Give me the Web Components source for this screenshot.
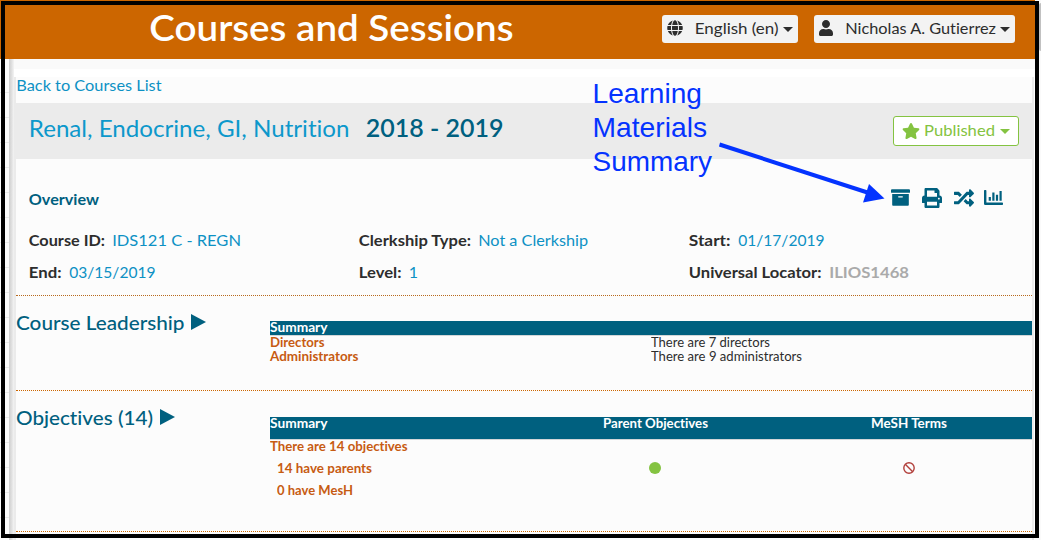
<!DOCTYPE html>
<html lang="en">
<head>
<meta charset="utf-8">
<title>Courses and Sessions</title>
<style>
html,body{margin:0;height:540px;overflow:hidden;background:#fff}
body{font-family:Lato,"Open Sans",sans-serif;font-variant-ligatures:none;color:#2d2d2d}
</style>
</head>
<body>
<course-app></course-app>

<template id="app">
<style>
:host{display:block;position:relative;width:1041px;height:540px;overflow:hidden;font-size:16px;background:#fff;--dy:-1px}
.page{display:flex;height:540px}
.side{flex:none;width:9px;height:100%;background:repeating-linear-gradient(#fdfdfd 0 24px,#ececec 24px 25px);background-position:0 9px}
.shade{flex:none;width:5px;background:linear-gradient(90deg,#cfcfcf,#ddd 45%,#f4f4f4)}
.main{flex:none;width:1021px;display:flex;flex-direction:column}
.gap1{height:10px;background:#fafafa}
.gap2{height:8px;background:#fff}
.sheet{flex:1;width:1016px;border:solid #ebebeb;border-width:0 2px;background:#fcfcfc}
.back{height:26px;display:flex;align-items:center;box-sizing:border-box;padding:0 0 9px;color:#0d91c4;--dx:.3px}
.frame{position:absolute;left:1px;top:1px;width:1030px;height:529px;border:4px solid #000}
.scroll{position:absolute;left:1039px;top:0;width:2px;height:540px;background:#fafafa}
.scroll i{position:absolute;left:0;top:3px;width:2px;height:48px;background:#c1c1c1;border-radius:2px 0 0 2px}
.edge{position:absolute;left:1035px;top:0;width:6px;height:1px;background:#fafafa}
</style>
<site-header></site-header>
<div class="page">
  <div class="side"></div><div class="shade"></div>
  <div class="main">
    <div class="gap1"></div><div class="gap2"></div>
    <div class="sheet">
      <div class="back"><fit-text w="145.5">Back to Courses List</fit-text></div>
      <course-title></course-title>
      <course-overview></course-overview>
      <course-section>
        <fit-text slot="title" w="168.5">Course Leadership</fit-text>
        <leadership-table></leadership-table>
      </course-section>
      <course-section style="--h:140px;--pt:26px">
        <fit-text slot="title" w="137">Objectives (14)</fit-text>
        <objectives-table></objectives-table>
      </course-section>
    </div>
  </div>
</div>
<div class="edge"></div>
<div class="scroll"><i></i></div>
<div class="frame"></div>
<callout-note></callout-note>
</template>

<template id="header">
<style>
:host{display:flex;height:59px;background:#c60;align-items:flex-start;box-sizing:border-box;padding-left:148.5px}
h1{margin:0;width:513.5px;height:54px;display:flex;align-items:center;color:#fff;font-size:36px;font-weight:600;--dy:0px;--dx:.3px}
.b{box-sizing:border-box;height:28px;margin:15px 16px 0 0;border-radius:3px;background:#f3f3f3;display:flex;align-items:center;padding:0 5px 1px}
.l{width:136px}.u{width:201px;--dx:.2px}
.l svg{width:16px;height:16px;margin-right:11px}
.u svg{width:14px;height:16px;margin-right:12px}
svg{fill:#2d2d2d;flex:none;margin-top:-1px}
i{margin:2px 0 0 auto;border:5px solid transparent;border-top-color:#2d2d2d;border-bottom:0}
</style>
<h1><fit-text w="364.5">Courses and Sessions</fit-text></h1>
<div class="b l"><svg viewBox="0 0 496 512"><path d="M336.5 160C322 70.7 287.8 8 248 8s-74 62.7-88.5 152h177zM152 256c0 22.2 1.2 43.5 3.3 64h185.3c2.1-20.5 3.3-41.8 3.3-64s-1.2-43.5-3.3-64H155.3c-2.1 20.5-3.3 41.8-3.3 64zm324.7-96c-28.6-67.9-86.5-120.4-158-141.6 24.4 33.8 41.2 84.7 50 141.6h108zM177.2 18.4C105.8 39.6 47.8 92.1 19.3 160h108c8.7-56.9 25.5-107.8 49.9-141.6zM487.4 192H372.7c2.1 21 3.3 42.5 3.3 64s-1.2 43-3.3 64h114.6c5.5-20.5 8.6-41.8 8.6-64s-3.1-43.5-8.5-64zM120 256c0-21.5 1.2-43 3.3-64H8.6C3.2 212.5 0 233.8 0 256s3.2 43.5 8.6 64h114.6c-2-21-3.2-42.5-3.2-64zm39.5 96c14.5 89.3 48.7 152 88.5 152s74-62.7 88.5-152h-177zm159.3 141.6c71.4-21.2 129.4-73.7 158-141.6h-108c-8.8 56.9-25.6 107.8-50 141.6zM19.3 352c28.6 67.9 86.5 120.4 158 141.6-24.4-33.8-41.2-84.7-50-141.6h-108z"/></svg><fit-text w="84.5">English (en)</fit-text><i></i></div>
<div class="b u"><svg viewBox="0 0 448 512"><path d="M224 256c70.7 0 128-57.3 128-128S294.7 0 224 0 96 57.3 96 128s57.3 128 128 128zm89.6 32h-16.7c-22.2 10.2-46.9 16-72.9 16s-50.6-5.8-72.9-16h-16.7C60.2 288 0 348.2 0 422.4V464c0 26.5 21.5 48 48 48h352c26.5 0 48-21.5 48-48v-41.6c0-74.2-60.2-134.4-134.4-134.4z"/></svg><fit-text w="151">Nicholas A. Gutierrez</fit-text><i></i></div>
</template>

<template id="title">
<style>
:host{display:flex;align-items:flex-start;height:56px;background:#ebebeb;box-sizing:border-box;padding:0 13px 0 12px;font-size:24px}
.t{height:51px;display:flex;align-items:center}
.n{color:#0d98cb;margin-right:15.500px}.y{color:#00607f;font-weight:600}
.p{margin:13px 0 0 auto;width:126px;height:30px;box-sizing:border-box;border:1px solid #84c341;border-radius:3px;background:#fff;color:#84c341;font-size:16px;display:flex;align-items:center;padding:0 8px 1px;--dx:0px}
svg{fill:#84c341;width:18px;height:16px;margin-right:4px;margin-top:1px}
i{margin:1px 0 0 auto;border:5px solid transparent;border-top-color:#84c341;border-bottom:0}
</style>
<div class="t n"><fit-text w="321.5">Renal, Endocrine, GI, Nutrition</fit-text></div>
<div class="t y"><fit-text w="138.5">2018 - 2019</fit-text></div>
<div class="p"><svg viewBox="0 0 576 512"><path d="M259.3 17.8L194 150.2 47.9 171.5c-26.2 3.8-36.7 36.1-17.7 54.6l105.7 103-25 145.5c-4.5 26.3 23.2 46 46.4 33.7L288 439.6l130.7 68.7c23.2 12.2 50.9-7.4 46.4-33.7l-25-145.5 105.7-103c19-18.5 8.5-50.8-17.7-54.6L382 150.2 316.7 17.8c-11.7-23.6-45.6-23.9-57.4 0z"/></svg><fit-text w="71">Published</fit-text><i></i></div>
</template>

<template id="overview">
<style>
:host{display:block;height:137px;box-sizing:border-box;padding:29px 12px 0;border-bottom:1px dotted #b86a1e}
.top{display:flex;height:22px;align-items:center;color:#00607f;font-weight:700}
.icons{margin-left:auto;display:flex;align-items:center;padding-right:17px;margin-top:-3px}
svg{fill:#00607f;display:block}
.g{display:grid;grid-template-columns:330px 330px 330px;grid-auto-rows:32px;padding-top:14px}
.f{display:flex;align-items:center;gap:7px;white-space:nowrap}
.f b{font-weight:700}
.f span{color:#0d91c4;--dx:.2px}.f span.m{color:#aaa;font-weight:700}
</style>
<div class="top"><fit-text w="71">Overview</fit-text>
<div class="icons">
<svg style="margin-right:12.5px" width="19" height="19" viewBox="0 0 512 512"><path d="M32 448c0 17.7 14.3 32 32 32h384c17.7 0 32-14.3 32-32V160H32v288zm160-212c0-6.6 5.4-12 12-12h104c6.600 0 12 5.400 12 12v8c0 6.600-5.400 12-12 12H204c-6.600 0-12-5.400-12-12v-8zM480 32H32C14.300 32 0 46.300 0 64v48c0 8.800 7.200 16 16 16h480c8.800 0 16-7.200 16-16V64c0-17.700-14.300-32-32-32z"/></svg>
<svg style="margin-right:12px" width="20" height="20" viewBox="0 0 512 512"><path d="M448 192V77.25c0-8.49-3.37-16.62-9.37-22.63L393.37 9.37c-6-6-14.14-9.37-22.63-9.37H96C78.33 0 64 14.33 64 32v160c-35.35 0-64 28.65-64 64v112c0 8.84 7.16 16 16 16h48v96c0 17.67 14.33 32 32 32h320c17.67 0 32-14.33 32-32v-96h48c8.84 0 16-7.16 16-16V256c0-35.35-28.65-64-64-64zm-64 256H128v-96h256v96zm0-224H128V64h192v48c0 8.84 7.16 16 16 16h48v96zm48 72c-13.25 0-24-10.75-24-24 0-13.26 10.75-24 24-24s24 10.74 24 24c0 13.25-10.75 24-24 24z"/></svg>
<svg style="margin-right:10px" width="20" height="20" viewBox="0 0 512 512"><path d="M504.971 359.029c9.373 9.373 9.373 24.569 0 33.941l-80 79.984c-15.01 15.01-40.971 4.49-40.971-16.971V416h-58.785a12.004 12.004 0 0 1-8.773-3.812l-70.556-75.596 53.333-57.143L352 336h32v-39.981c0-21.438 25.943-31.998 40.971-16.971l80 79.981zM12 176h84l52.781 56.551 53.333-57.143-70.556-75.596A11.999 11.999 0 0 0 122.785 96H12c-6.627 0-12 5.373-12 12v56c0 6.627 5.373 12 12 12zm372 0v39.984c0 21.46 25.961 31.98 40.971 16.971l80-79.984c9.373-9.373 9.373-24.569 0-33.941l-80-79.981C409.943 24.021 384 34.582 384 56.019V96h-58.785a12.004 12.004 0 0 0-8.773 3.812L96 336H12c-6.627 0-12 5.373-12 12v56c0 6.627 5.373 12 12 12h110.785c3.326 0 6.503-1.381 8.773-3.812L352 176h32z"/></svg>
<svg width="19" height="15" viewBox="0 0 19 15"><path d="M0 .7Q0 0 .7 0h1Q2.4 0 2.4.7v11.9h15.9q.7 0 .7.7v1q0 .7-.7.7H1.2Q0 15 0 13.8zM4.7 7h2.2v3.7H4.7zM8.3 2.6h2.2v8.1H8.3zM11.9 4.8h2.2v5.9h-2.2zM15.5 1h2.2v9.7h-2.2z"/></svg>
</div></div>
<div class="g">
<div class="f"><b><fit-text w="77">Course ID:</fit-text></b><span><fit-text w="129">IDS121 C - REGN</fit-text></span></div>
<div class="f"><b><fit-text w="113">Clerkship Type:</fit-text></b><span><fit-text w="110">Not a Clerkship</fit-text></span></div>
<div class="f"><b><fit-text w="42.5">Start:</fit-text></b><span><fit-text w="86.5">01/17/2019</fit-text></span></div>
<div class="f"><b><fit-text w="33.5">End:</fit-text></b><span><fit-text w="86.5">03/15/2019</fit-text></span></div>
<div class="f"><b><fit-text w="43.5">Level:</fit-text></b><span><fit-text w="10">1</fit-text></span></div>
<div class="f"><b><fit-text w="133.5">Universal Locator:</fit-text></b><span class="m"><fit-text w="80">ILIOS1468</fit-text></span></div>
</div>
</template>

<template id="section">
<style>
:host{display:flex;height:var(--h,94px);border-bottom:1px dotted #c60;--dx:0px}
.h{flex:none;width:254px;height:54px;display:flex;align-items:center;color:#00607f;font-size:20px;font-weight:500}
i{margin:-2px 0 0 6.5px;border:8.5px solid transparent;border-left:15px solid #00607f;border-right:0}
.c{flex:1;padding-top:var(--pt,25px)}
</style>
<div class="h"><slot name="title"></slot><i></i></div>
<div class="c"><slot></slot></div>
</template>

<template id="leadership">
<style>
:host{display:block;font-size:13px;line-height:14px;--dx:0px;--dy:0px}
.h{background:#00607f;color:#fff;font-weight:700;height:14px;line-height:12px;box-shadow:0 1px #d2d6d8}
.r{display:grid;grid-template-columns:381px 1fr;height:14px}
b{color:#c75b12;font-weight:700}
</style>
<div class="h"><fit-text w="57.5">Summary</fit-text></div>
<div class="r"><b><fit-text w="54.5">Directors</fit-text></b><span><fit-text w="119">There are 7 directors</fit-text></span></div>
<div class="r"><b><fit-text w="88.5">Administrators</fit-text></b><span><fit-text w="151">There are 9 administrators</fit-text></span></div>
</template>

<template id="objectives">
<style>
:host{display:block;font-size:13px;font-weight:700;line-height:14px;color:#c75b12;--dx:0px;--dy:0px}
.r{display:grid;grid-template-columns:258px 254px 250px;height:22px}
.h{background:#00607f;color:#fff;line-height:12px;box-shadow:0 1px #d2d6d8}
.c{text-align:center}.in{padding-left:7px}
.r>.c:last-child{padding-left:4px}
svg{display:block;margin:1px auto 0}
</style>
<div class="r h"><div><fit-text w="57.5">Summary</fit-text></div><div class="c"><fit-text w="105">Parent Objectives</fit-text></div><div class="c"><fit-text w="76">MeSH Terms</fit-text></div></div>
<div class="r"><div><fit-text w="137.5">There are 14 objectives</fit-text></div></div>
<div class="r"><div class="in"><fit-text w="95">14 have parents</fit-text></div>
<div class="c"><svg width="12" height="12"><circle cx="6" cy="6" r="6" fill="#84c341"/></svg></div>
<div class="c"><svg width="12" height="12"><g fill="none" stroke="#b2403c" stroke-width="1.4"><circle cx="6" cy="6" r="5.2"/><path d="M2.3 2.3l7.4 7.4"/></g></svg></div></div>
<div class="r"><div class="in"><fit-text w="76">0 have MesH</fit-text></div></div>
</template>

<template id="note">
<style>
:host{position:absolute;left:591px;top:77px;width:300px;height:130px;color:#0433ff;font:28px/34px "Liberation Sans",Arial,sans-serif;--dx:1.6px;--dy:0px}
div{height:34px}
svg{position:absolute;left:0;top:0}
</style>
<div><fit-text w="111">Learning</fit-text></div>
<div><fit-text w="116">Materials</fit-text></div>
<div><fit-text w="121">Summary</fit-text></div>
<svg width="300" height="130" viewBox="591 77 300 130"><path d="M719.5 144.5L869 193" stroke="#0433ff" stroke-width="4"/><path d="M884.5 198.500L869 184 863 202.500z" fill="#0433ff"/></svg>
</template>

<script>
// Inline label whose glyph run is stretched to a fixed width, in px.
// --dx / --dy nudge the run inside its box.
class FitText extends HTMLElement {
  connectedCallback() {
    if (this.shadowRoot) return;
    this.attachShadow({ mode: 'open' }).innerHTML =
      '<style>:host{display:inline-block;white-space:nowrap;text-align:left}span{display:inline-block;white-space:nowrap;transform-origin:0 50%}</style><span><slot></slot></span>';
    const w = parseFloat(this.getAttribute('w'));
    const span = this.shadowRoot.querySelector('span');
    const natural = span.getBoundingClientRect().width;
    const dx = parseFloat(getComputedStyle(this).getPropertyValue('--dx') || '0.8');
    const scale = this.textContent.length > 1 ? (w - dx) / natural : 1;
    span.style.transform = `translate(${dx}px,var(--dy,0px)) scaleX(${scale.toFixed(4)})`;
    this.style.width = w + 'px';
  }
}
function define(name, id) {
  customElements.define(name, class extends HTMLElement {
    constructor() {
      super();
      this.attachShadow({ mode: 'open' }).appendChild(document.getElementById(id).content.cloneNode(true));
    }
  });
}
define('site-header', 'header');
define('course-title', 'title');
define('course-overview', 'overview');
define('course-section', 'section');
define('leadership-table', 'leadership');
define('objectives-table', 'objectives');
define('callout-note', 'note');
define('course-app', 'app');
customElements.define('fit-text', FitText);
</script>
</body>
</html>
